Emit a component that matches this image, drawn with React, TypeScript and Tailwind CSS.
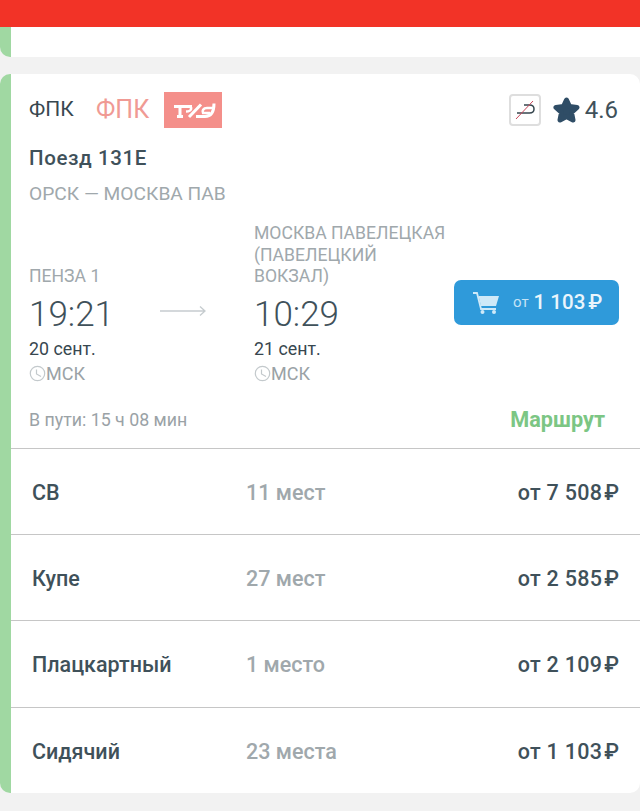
import React from 'react';

const rows = [
  { name: 'СВ', seats: '11 мест', price: 'от 7 508' },
  { name: 'Купе', seats: '27 мест', price: 'от 2 585' },
  { name: 'Плацкартный', seats: '1 место', price: 'от 2 109' },
  { name: 'Сидячий', seats: '23 места', price: 'от 1 103' },
];

function Clock() {
  return (
    <svg width="17" height="17" viewBox="0 0 17 17" fill="none" stroke="#c3c9cc" strokeWidth="1.2">
      <circle cx="8.5" cy="8.5" r="7.2" />
      <path d="M7.5 4.5v4.5l4.5 2.5" />
    </svg>
  );
}

function Stop({ station, time, date }: { station: React.ReactNode; time: string; date: string }) {
  return (
    <div className="flex flex-col">
      <div className="text-[17.6px] leading-[21.5px] text-[#a0a8ac]">{station}</div>
      <div className="mt-[6px] text-[35px] leading-[42px] font-light text-[#3f515a]">{time}</div>
      <div className="mt-[1px] text-[17.8px] leading-[24px] text-[#37474f]">{date}</div>
      <div className="flex items-center h-[26px] text-[18px] text-[#9aa2a6]">
        <Clock />
        <span>МСК</span>
      </div>
    </div>
  );
}

export default function App() {
  return (
    <div className="w-[640px] h-[811px] overflow-hidden bg-[#f2f2f2] font-['Roboto',sans-serif]">
      <div className="h-[27px] bg-[#f23327]" />
      <div className="h-[30px] bg-white border-l-[11px] border-[#a0d8a2] rounded-bl-[10px]" />

      <div className="mt-[17px] h-[719px] bg-white border-l-[11px] border-[#a0d8a2] rounded-[10px] flex flex-col">
        {/* Header */}
        <div className="pl-[18px] pr-[22px] mt-[18px] flex items-center justify-between h-[36px]">
          <div className="flex items-center">
            <span className="text-[21px] text-[#37474f] w-[67px]">ФПК</span>
            <span className="text-[25px] text-[#f09a94] w-[68px]">ФПК</span>
            <div className="w-[58px] h-[36px] bg-[#f48f8a]">
              <svg width="58" height="36" viewBox="0 0 58 36" fill="none" stroke="white">
                <path d="M10 14.500H28" strokeWidth="3" />
                <path d="M16 14v10M13 24.500h6" strokeWidth="3" />
                <path d="M24 14.500c5 0 4 5-2 5" strokeWidth="2.500" />
                <path d="M25 25L37 12.500" strokeWidth="3" />
                <path d="M32 24.500h9c6 0 9-5 9-13" strokeWidth="3" />
                <path d="M49 16h-6c-4 0-5 3-4 5h7" strokeWidth="2.500" />
              </svg>
            </div>
          </div>
          <div className="flex items-center">
            <div className="w-[32px] h-[32px] border-2 border-[#dedede] rounded-[4px] flex items-center justify-center mr-[12px]">
              <svg width="24" height="24" viewBox="0 0 24 24" fill="none">
                <path d="M4 15h12.500c6 0 6-8 0-8H11" stroke="#37474f" strokeWidth="1.500" />
                <path d="M3 21L20 3" stroke="#c8465a" strokeWidth="1" />
              </svg>
            </div>
            <svg width="27" height="26" viewBox="0 0 27 26" fill="#2f4d66" stroke="#2f4d66" strokeWidth="5" strokeLinejoin="round">
              <path d="M13.500 3l3 6.500 7.500 1-5.500 5 1.500 7.500-6.500-3.500L7 23l1.500-7.500-5.500-5 7.500-1z" />
            </svg>
            <span className="ml-[5px] text-[24px] text-[#3f515a]">4.6</span>
          </div>
        </div>

        <div className="pl-[18px] mt-[16px] text-[20.5px] leading-[28px] font-medium text-[#3f515a] tracking-[0.6px]">Поезд 131Е</div>
        <div className="pl-[18px] mt-[8px] text-[19.2px] leading-[28px] text-[#a0a8ac]">ОРСК — МОСКВА ПАВ</div>

        {/* Route */}
        <div className="pl-[18px] pr-[21px] mt-[15px] flex items-start">
          <div className="w-[225px] pt-[43px] flex">
            <div className="w-[130px]">
              <Stop station="ПЕНЗА 1" time="19:21" date="20 сент." />
            </div>
            <svg className="mt-[39px]" width="48" height="12" viewBox="0 0 48 12" fill="none" stroke="#c6cccf" strokeWidth="1.300">
              <path d="M1 6h45M41 1.500L46 6l-5 4.500" />
            </svg>
          </div>
          <div className="w-[200px]">
            <Stop
              station={
                <>
                  МОСКВА ПАВЕЛЕЦКАЯ
                  <br />
                  (ПАВЕЛЕЦКИЙ
                  <br />
                  ВОКЗАЛ)
                </>
              }
              time="10:29"
              date="21 сент."
            />
          </div>
          <div className="mt-[57px] w-[165px] h-[45px] bg-[#2f9ada] rounded-[7px] flex items-center pl-[18px]">
            <svg width="28" height="24" viewBox="0 0 28 24" fill="none">
              <path d="M1 2h4l4 16h15" stroke="#cfe9f8" strokeWidth="1.800" />
              <path d="M6.500 5H27l-3 10H9z" fill="#cfe9f8" />
              <circle cx="10.500" cy="21" r="2" fill="#cfe9f8" />
              <circle cx="22" cy="21" r="2" fill="#cfe9f8" />
            </svg>
            <span className="ml-[13px] text-[15px] text-[#c5e3f6]">от</span>
            <span className="ml-[5px] text-[20.5px] font-medium text-[#eaf5fc]">1 103</span>
            <span className="ml-[3px] text-[20.5px] font-medium text-[#eaf5fc]">₽</span>
          </div>
        </div>

        <div className="pl-[18px] pr-[35px] mt-[21px] h-[26px] flex items-center justify-between">
          <span className="text-[17.8px] text-[#9aa2a6]">В пути: 15 ч 08 мин</span>
          <span className="text-[21.7px] font-bold text-[#7cc684]">Маршрут</span>
        </div>

        {/* Classes */}
        <div className="mt-[14px] flex-1 flex flex-col">
          {rows.map((row) => (
            <div key={row.name} className="flex-1 flex items-center border-t border-[#c6c6c6] px-[21px] pt-[3px] text-[21.5px] font-medium">
              <span className="w-[214px] text-[#3f515a]">{row.name}</span>
              <span className="flex-1 text-[#a0a8ac]">{row.seats}</span>
              <span className="text-[#3f515a] tracking-[0.3px]">{row.price}</span>
              <span className="ml-[2px] text-[#3f515a]">₽</span>
            </div>
          ))}
        </div>
      </div>
    </div>
  );
}
